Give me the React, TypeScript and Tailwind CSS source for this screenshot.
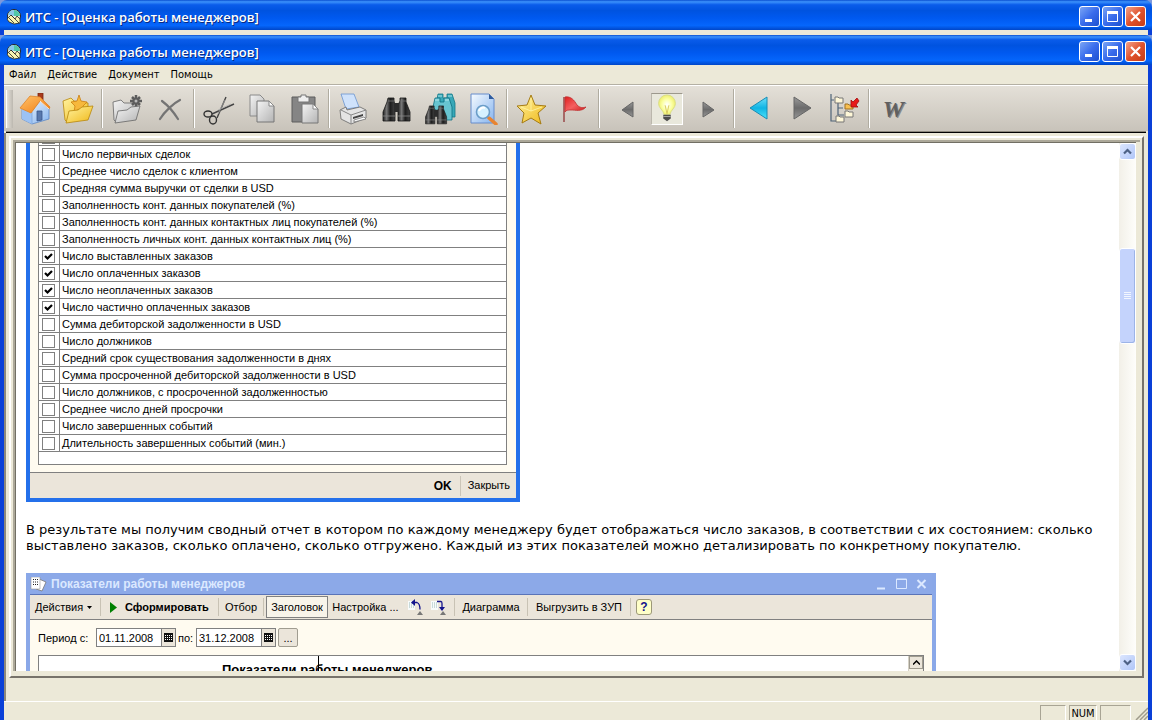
import type { ReactNode } from "react";

type Criterion = { label: string; checked?: boolean };
type Tool = { label: string; icon: ReactNode; active?: boolean };

const menu = ["Файл", "Действие", "Документ", "Помощь"];

const criteria: Criterion[] = [
  { label: "Число первичных сделок" },
  { label: "Среднее число сделок с клиентом" },
  { label: "Средняя сумма выручки от сделки в USD" },
  { label: "Заполненность конт. данных покупателей (%)" },
  { label: "Заполненность конт. данных контактных лиц покупателей (%)" },
  { label: "Заполненность личных конт. данных контактных лиц (%)" },
  { label: "Число выставленных заказов", checked: true },
  { label: "Число оплаченных заказов", checked: true },
  { label: "Число неоплаченных заказов", checked: true },
  { label: "Число частично оплаченных заказов", checked: true },
  { label: "Сумма дебиторской задолженности в USD" },
  { label: "Число должников" },
  { label: "Средний срок существования задолженности в днях" },
  { label: "Сумма просроченной дебиторской задолженности в USD" },
  { label: "Число должников, с просроченной задолженностью" },
  { label: "Среднее число дней просрочки" },
  { label: "Число завершенных событий" },
  { label: "Длительность завершенных событий (мин.)" },
];

/* ---------- icons ---------- */

function Icon({ children }: { children: ReactNode }) {
  return (
    <svg width="32" height="32" viewBox="0 0 32 32" fill="none" aria-hidden="true">
      {children}
    </svg>
  );
}

function Defs() {
  return (
    <svg width="0" height="0" className="absolute" aria-hidden="true">
      <defs>
        <linearGradient id="roof" x1="0" y1="0" x2="1" y2="1"><stop offset="0" stopColor="#ffc36a" /><stop offset="1" stopColor="#f07a10" /></linearGradient>
        <linearGradient id="wall" x1="0" y1="0" x2="1" y2="1"><stop offset="0" stopColor="#f6fbff" /><stop offset="1" stopColor="#86b4ee" /></linearGradient>
        <linearGradient id="gold" x1="0" y1="0" x2="1" y2="1"><stop offset="0" stopColor="#fff3a0" /><stop offset="1" stopColor="#f0b818" /></linearGradient>
        <linearGradient id="grey" x1="0" y1="0" x2="1" y2="1"><stop offset="0" stopColor="#f4f4f4" /><stop offset="1" stopColor="#b4b4b4" /></linearGradient>
        <linearGradient id="dark" x1="0" y1="0" x2="1" y2="0"><stop offset="0" stopColor="#222" /><stop offset="0.3" stopColor="#777" /><stop offset="0.6" stopColor="#1c1c1c" /><stop offset="1" stopColor="#444" /></linearGradient>
        <linearGradient id="steel" x1="0" y1="0" x2="0" y2="1"><stop offset="0" stopColor="#9a9a9a" /><stop offset="0.5" stopColor="#6b6b6b" /><stop offset="1" stopColor="#979797" /></linearGradient>
        <linearGradient id="aqua" x1="0" y1="0" x2="0" y2="1"><stop offset="0" stopColor="#6fe0fa" /><stop offset="0.5" stopColor="#10b4e4" /><stop offset="1" stopColor="#4ce4fa" /></linearGradient>
        <linearGradient id="flag" x1="0" y1="0" x2="1" y2="1"><stop offset="0" stopColor="#e02020" /><stop offset="0.5" stopColor="#f46060" /><stop offset="1" stopColor="#c81818" /></linearGradient>
        <radialGradient id="glow"><stop offset="0" stopColor="#ffffff" /><stop offset="0.6" stopColor="#fbffa0" /><stop offset="1" stopColor="#eeee70" /></radialGradient>
      </defs>
    </svg>
  );
}

const home = (
  <Icon>
    <path d="M19 0h5v9l-5-4z" fill="#a83a1c" stroke="#7c2812" strokeWidth="0.800" />
    <path d="M3 16v10l10 5 17-5V14l-9-7-8 11z" fill="url(#wall)" stroke="#5c86c4" strokeWidth="0.800" />
    <path d="m3 16 10 3v12l-10-5z" fill="#9cc2f4" />
    <path d="M13 19v12" stroke="#7ca6dc" strokeWidth="0.800" />
    <path d="M1 15 11 3l10 1 10 10-1 2-9-8-9 12z" fill="url(#roof)" stroke="#e08428" strokeWidth="0.800" />
    <path d="m21 8 9 8" stroke="#fff" strokeWidth="0.800" />
    <path d="M18 18h5v9l-5 1z" fill="#5878ac" stroke="#38558c" strokeWidth="0.800" />
  </Icon>
);

const folderStar = (
  <Icon>
    <path d="M1 8l8-3 3 3 14 2v8L5 29 3 27z" fill="url(#gold)" stroke="#b8860c" strokeWidth="0.800" />
    <path d="m17 2 2 6 6 1-4 4 1 6-5-3-5 3 1-6-4-4 6-1z" fill="#f6b83c" stroke="#cc8010" strokeWidth="0.800" />
    <path d="m7 18 9-1 4-3 11-1-5 14-22 3z" fill="url(#gold)" stroke="#b8860c" strokeWidth="0.800" />
  </Icon>
);

const folderNew = (
  <Icon>
    <path d="M2 9l8-2 3 3h13v8L5 29l-2-2z" fill="url(#grey)" stroke="#666" strokeWidth="0.800" />
    <path d="M25 2v12M19 8h12M21 4l8 8M29 4l-8 8" stroke="#5c5c5c" strokeWidth="2.500" />
    <circle cx="25" cy="8" r="1.500" fill="#bbb" />
    <path d="m7 18 9-1 4-3 9-1-4 14-21 3z" fill="url(#grey)" stroke="#666" strokeWidth="0.800" />
  </Icon>
);

const cross = (
  <Icon>
    <path d="M8 8c4 3 11 10 16 18M26 7C20 10 11 18 6 26" stroke="#747474" strokeWidth="2.200" strokeLinecap="round" />
  </Icon>
);

const scissors = (
  <Icon>
    <path d="m23 4-9 21M31 11 9 21" stroke="#444" strokeWidth="1.400" />
    <path d="m22 7-7 14M28 11l-13 6" stroke="#aaa" strokeWidth="0.700" />
    <ellipse cx="5" cy="21" rx="4" ry="3" stroke="#333" strokeWidth="1.400" />
    <ellipse cx="10" cy="27" rx="3.500" ry="4" stroke="#333" strokeWidth="1.400" />
  </Icon>
);

const copy = (
  <Icon>
    <path d="M4 2h10l4 4v17H4z" fill="url(#grey)" stroke="#8a8a8a" />
    <path d="M11 8h12l5 5v16H11z" fill="url(#grey)" stroke="#777" />
    <path d="M23 8v5h5z" fill="#fff" stroke="#888" />
  </Icon>
);

const paste = (
  <Icon>
    <path d="M3 4h23v25H3z" fill="#858585" stroke="#5c5c5c" />
    <path d="M9 4h3V2h5v2h3v5H9z" fill="#eee" stroke="#777" />
    <path d="M13 11h11l5 5v14H13z" fill="url(#grey)" stroke="#777" />
    <path d="M24 11v5h5z" fill="#fff" stroke="#888" />
  </Icon>
);

const printer = (
  <Icon>
    <path d="M3 1h13l5 13-13 2z" fill="#cfe2fb" stroke="#6a94d0" strokeWidth="0.800" />
    <path d="m2 17 6-3 1 3 13-3 6 3v8L13 31 3 26z" fill="#e4e4e4" stroke="#666" strokeWidth="0.800" />
    <path d="m3 17 10 5 15-5" stroke="#888" />
    <path d="M13 22v9" stroke="#888" />
    <path d="m15 24 10-3v2l-10 3z" fill="#444" />
    <path d="m16 29 12-3-2-2-10 3z" fill="#fff" stroke="#777" strokeWidth="0.800" />
  </Icon>
);

function BinocularShape() {
  return (
    <>
      <path d="M7 5h6v3l1 4v16H2V19L6 9z" fill="url(#dark)" stroke="#181818" strokeWidth="0.800" />
      <path d="M19 5h6v4l4 10v9H17V12l2-4z" fill="url(#dark)" stroke="#181818" strokeWidth="0.800" />
      <path d="M13 10h5v9h-5z" fill="#2c2c2c" />
      <path d="M2 23h12M17 23h12" stroke="#888" strokeWidth="0.800" />
      <path d="M7 8h6M19 8h6" stroke="#777" strokeWidth="0.800" />
    </>
  );
}

const binoculars = <Icon><BinocularShape /></Icon>;

const binocularsAll = (
  <Icon>
    <path d="M14 1h5v4h4V1h5l3 9v14h-7L12 11z" fill="#38a8b8" stroke="#147888" strokeWidth="0.800" />
    <path d="M11 5h5v4h4V5h5l3 9v13h-7L9 14z" fill="#67c4d0" stroke="#0c6f80" strokeWidth="0.800" />
    <path d="M14 3h4M24 3h4M11 7h4M21 7h4" stroke="#c8f2f6" strokeWidth="0.800" />
    <g transform="translate(0 9) scale(0.780 0.780)"><BinocularShape /></g>
  </Icon>
);

const findInPage = (
  <Icon>
    <path d="M4 1h18l5 5v24H4z" fill="url(#wall)" stroke="#668ccc" />
    <path d="M22 1v5h5z" fill="#315c9c" />
    <path d="m22 25 7 6" stroke="#e88430" strokeWidth="3.500" strokeLinecap="round" />
    <circle cx="16" cy="19" r="6.500" fill="#d5f1ff" stroke="#6b9dc8" strokeWidth="1.600" />
    <path d="M12 18c1-3 4-4 6-3" stroke="#fff" strokeWidth="2" />
  </Icon>
);

const star = (
  <Icon>
    <path d="m15 2 4 10 11 1-8 7 3 11-10-6-9 5 2-10-7-7 10-1z" fill="url(#gold)" stroke="#a67c14" />
    <path d="M15 5v13L5 14M15 18l11-4" stroke="#fff6a8" strokeWidth="0.800" />
  </Icon>
);

const flag = (
  <Icon>
    <path d="M5 4v25" stroke="#9c5050" strokeWidth="1.600" />
    <path d="M6 4c6-1 9 3 12 8 3 3 6 3 9 2-4 5-11 3-15 3-3 0-5 0-6 2z" fill="url(#flag)" stroke="#c03030" strokeWidth="0.800" />
  </Icon>
);

const smallLeft = <Icon><path d="M25 9v15L14 17z" fill="url(#steel)" stroke="#666" /></Icon>;
const smallRight = <Icon><path d="M9 9v15l11-7z" fill="url(#steel)" stroke="#666" /></Icon>;
const bigLeft = <Icon><path d="M24 4v22L7 15z" fill="url(#aqua)" stroke="#188cb4" /></Icon>;
const bigRight = <Icon><path d="M8 4v22l17-11z" fill="url(#steel)" stroke="#666" /></Icon>;

const bulb = (
  <Icon>
    <path d="M7 10a9 9 0 0 1 18 0c0 5-5 7-6 12h-6C12 17 7 15 7 10z" fill="url(#glow)" stroke="#d9dd84" />
    <path d="m14 12 2 9 2-9" stroke="#d8c860" />
    <path d="M12 22h8v4l-4 3-4-3z" fill="#4c4c4c" />
    <path d="M12 24h8" stroke="#aaa" />
  </Icon>
);

const tree = (
  <Icon>
    <path d="M2 1v27h5M2 7h3M9 10v12h6M9 15h5" stroke="#4f6478" strokeWidth="1.200" />
    <path d="M6 4h3l1 1h4v5H6zM7 23h3l1 1h4v5H7zM16 18h3l1 1h4v5h-8z" fill="#fff8d8" stroke="#767676" />
    <path d="M16 11h3l1 1h4v4h-8z" fill="#f8c050" stroke="#a07020" />
    <path d="m28 5-4 4-2-2v7h7l-2-2 3-4z" fill="#e81818" stroke="#a00c0c" strokeWidth="0.800" />
  </Icon>
);

const word = (
  <span aria-hidden="true" className="font-['Liberation_Serif',serif] text-2xl font-bold italic text-[#606060] [text-shadow:1px_1px_0_#888]">W</span>
);

const toolGroups: Tool[][] = [
  [{ label: "Домой", icon: home }, { label: "Открыть избранное", icon: folderStar }],
  [{ label: "Новая папка", icon: folderNew }, { label: "Удалить", icon: cross }],
  [{ label: "Вырезать", icon: scissors }, { label: "Копировать", icon: copy }, { label: "Вставить", icon: paste }],
  [{ label: "Печать", icon: printer }, { label: "Найти", icon: binoculars }, { label: "Найти везде", icon: binocularsAll }, { label: "Найти на странице", icon: findInPage }],
  [{ label: "Избранное", icon: star }, { label: "Пометить", icon: flag }],
  [{ label: "Предыдущее", icon: smallLeft }, { label: "Подсветка", icon: bulb, active: true }, { label: "Следующее", icon: smallRight }],
  [{ label: "Назад", icon: bigLeft }, { label: "Вперед", icon: bigRight }, { label: "Дерево", icon: tree }],
  [{ label: "Экспорт в Word", icon: word }],
];

/* ---------- window chrome ---------- */

function AppLogo() {
  return (
    <svg width="16" height="16" viewBox="0 0 16 16" aria-hidden="true">
      <circle cx="8" cy="7" r="6.500" fill="#f4f4d8" stroke="#222" />
      <path d="M8 1a6 6 0 0 1 6 6H8z" fill="#50c8a8" />
      <path d="M8 1a6 6 0 0 0-6 5l6 1z" fill="#88c8e8" />
      <path d="m1 10 4-4 4 4 2-3 3 3v4l-6 1-5-2z" fill="#f8f4b0" stroke="#222" strokeWidth="0.800" />
      <path d="m5 6 8 8M3 9l5 5" stroke="#222" strokeWidth="0.800" />
    </svg>
  );
}

function CaptionButton({ label, close, children }: { label: string; close?: boolean; children: ReactNode }) {
  return (
    <button
      aria-label={label}
      className={[
        "flex size-[21px] items-center justify-center rounded-[3px] border border-white bg-linear-to-br",
        close ? "from-[#f0a088] via-[#e0522c] to-[#c83c14]" : "from-[#7ca4f4] via-[#3a6cec] to-[#1c50d0]",
      ].join(" ")}
    >
      <svg width="15" height="15" viewBox="0 0 15 15" fill="none" stroke="#fff" aria-hidden="true">{children}</svg>
    </button>
  );
}

function TitleBar() {
  return (
    <div className="flex h-[30px] shrink-0 items-center justify-between rounded-t-[7px] bg-[linear-gradient(#0a4fd0_0%,#3c92fc_6%,#0a5cea_16%,#0053e0_35%,#0059f0_60%,#0566fc_85%,#0046c8_100%)] px-[6px] pt-[3px]">
      <div className="flex items-center gap-[3px]">
        <AppLogo />
        <h1 className="whitespace-nowrap font-['Open_Sans',sans-serif] text-[13px] font-semibold leading-4 text-white [text-shadow:1px_1px_0_#0a2a80]">
          ИТС - [Оценка работы менеджеров]
        </h1>
      </div>
      <div className="flex gap-[2px]">
        <CaptionButton label="Свернуть"><path d="M3 11.500h7" strokeWidth="3" /></CaptionButton>
        <CaptionButton label="Развернуть"><path d="M2 3.500h11" strokeWidth="3" /><path d="M2.500 3v9.500h10V3" /></CaptionButton>
        <CaptionButton label="Закрыть окно" close><path d="m3 3 9 9M12 3l-9 9" strokeWidth="2.200" /></CaptionButton>
      </div>
    </div>
  );
}

function MenuBar() {
  return (
    <nav className="flex h-5 items-start gap-[11px] border-b border-[#b4b0a4] bg-[#ece9d8] pl-[5px] pt-[2px] font-['DejaVu_Sans_Condensed','DejaVu_Sans',sans-serif] text-[11px] leading-4 text-black">
      {menu.map((m) => (
        <button key={m}>{m}</button>
      ))}
    </nav>
  );
}

function Toolbar() {
  return (
    <div className="flex h-[46px] shrink-0 items-center border-t border-white bg-linear-to-b from-[#e4e0d8] to-[#c8c3ba] pl-[2px]">
      <div className="h-[38px] w-[7px] border-l border-white bg-linear-to-r from-[#e4e0d8] to-[#bcb8b0]" />
      {toolGroups.map((group, i) => (
        <div key={i} className="flex items-center">
          {i > 0 && <div className="mx-[2px] h-[39px] w-[2px] border-l border-[#b0aca0] bg-white" />}
          {group.map((t) => (
            <button key={t.label} aria-label={t.label} className="flex h-9 w-[43px] items-center justify-center">
              <span className={t.active ? "flex size-8 items-center justify-center border border-b-white border-r-white border-t-[#9c988c] border-l-[#bbb7ac] bg-[#e9e8dc]" : "flex size-8 items-center justify-center"}>
                {t.icon}
              </span>
            </button>
          ))}
        </div>
      ))}
    </div>
  );
}

function ScrollButton({ down }: { down?: boolean }) {
  return (
    <button aria-label={down ? "Вниз" : "Вверх"} className="flex h-[17px] shrink-0 items-center justify-center rounded-[3px] border border-white bg-linear-to-br from-[#dce6fe] to-[#b0c6f8]">
      <svg width="9" height="7" viewBox="0 0 9 7" fill="none" stroke="#4d6185" strokeWidth="2.200" aria-hidden="true">
        <path d={down ? "m1 1.500 3.500 3.500L8 1.500" : "M1 5.500 4.500 2 8 5.500"} />
      </svg>
    </button>
  );
}

function Scrollbar() {
  return (
    <div className="flex w-[17px] shrink-0 flex-col bg-linear-to-r from-[#f2f0e8] to-[#fefefb]">
      <ScrollButton />
      <div className="flex-[88]" />
      <div className="flex flex-[95] flex-col items-center justify-center gap-px rounded-[3px] border border-white bg-[#c4d3fc] shadow-[inset_-1px_-1px_0_#9cb4e8]">
        {[0, 1, 2, 3].map((n) => (
          <div key={n} className="h-px w-[7px] bg-[#f2f6ff]" />
        ))}
      </div>
      <div className="flex-[311]" />
      <ScrollButton down />
    </div>
  );
}

/* ---------- article ---------- */

function CriterionRow({ label, checked }: Criterion) {
  return (
    <label className="flex h-[17px] items-center border-b border-[#808080]">
      <span className="relative flex h-4 w-[21px] items-center justify-center border-r border-[#808080] pr-[2px]">
        <input type="checkbox" defaultChecked={checked} className="peer size-[13px] appearance-none border border-[#808080] bg-white" />
        <svg width="9" height="9" viewBox="0 0 9 9" className="absolute hidden peer-checked:block" aria-hidden="true">
          <path d="m1 4 2.500 2.500L8 2" fill="none" stroke="#000" strokeWidth="2.200" />
        </svg>
      </span>
      <span className="whitespace-nowrap pl-[2px]">{label}</span>
    </label>
  );
}

function CriteriaDialog() {
  return (
    <section className="-mt-[14px] w-[494px] border-4 border-t-0 border-[#2470ea] bg-[#fffbf0]">
      <div className="ml-2 mr-[9px] border border-t-0 border-[#808080] bg-white text-[11px] leading-4">
        <CriterionRow label="" />
        {criteria.map((c) => (
          <CriterionRow key={c.label} {...c} />
        ))}
        <div className="h-3" />
      </div>
      <div className="mt-[7px] flex h-[26px] items-center justify-end border-t border-[#808080] bg-[#ebe5da] pr-[6px] text-[11px]">
        <button className="pr-2 text-xs font-bold">OK</button>
        <div className="h-5 w-px bg-[#cbc5b8]" />
        <button className="pl-[7px]">Закрыть</button>
      </div>
    </section>
  );
}

function Divider() {
  return <div className="h-[18px] w-px bg-[#c8c2b4]" />;
}

function StepIcon({ down }: { down?: boolean }) {
  return (
    <svg width="16" height="16" viewBox="0 0 16 16" fill="none" aria-hidden="true">
      <path d="M1 2h7v9H1z" fill="#f8fbfb" />
      <path d="M2 4h5M2 6h5M2 8h5" stroke="#98b8b8" strokeDasharray="1 1" />
      <path d={down ? "M7 2.500h4q1 0 1 2v6" : "M5 3.500h5q3 1 3 7"} stroke="#14148c" strokeWidth="1.300" />
      <path d={down ? "M9 8h6l-3 4z" : "M8 0v7L4 3.500z"} fill="#14148c" />
      <path d="m10 16 3-4 3 4z" fill="#777" />
    </svg>
  );
}

function DateField({ label, value, labelClass }: { label: string; value: string; labelClass: string }) {
  return (
    <label className="flex items-center">
      <span className={labelClass}>{label}</span>
      <input defaultValue={value} className="h-[19px] w-[66px] border border-[#808080] bg-white pl-[2px]" />
      <span className="-ml-px flex h-[19px] w-[15px] items-center justify-center border border-[#808080] bg-[#ebe5da]">
        <svg width="9" height="9" viewBox="0 0 9 9" aria-hidden="true">
          <path d="M0 0h9v9H0z" fill="#111" />
          <path d="M1 2.500h7M1 4.500h7M1 6.500h7" stroke="#fff" strokeDasharray="1 1" />
        </svg>
      </span>
    </label>
  );
}

function ReportWindow() {
  return (
    <section className="mt-[19px] w-[910px] border-x-4 border-t border-[#8aa8e8] bg-[#fffbf0] text-[11px] leading-4">
      <div className="flex h-[21px] items-center border-b border-[#5a74b8] bg-[#8ca9e8]">
        <svg width="17" height="15" viewBox="0 0 17 15" aria-hidden="true">
          <path d="m9 2 7 3-4 9-6-2z" fill="#fff" stroke="#777" strokeWidth="0.800" />
          <path d="M1 0h9v12H1z" fill="#fff" stroke="#999" strokeWidth="0.600" />
          <path d="M3 2.500h6M3 5h6M3 7.500h6" stroke="#222" strokeDasharray="1 1" />
        </svg>
        <h2 className="ml-1 grow text-xs font-bold text-[#dbe8ff]">Показатели работы менеджеров</h2>
        <div className="flex gap-2 pr-1">
          {["M1 10.500h8", "M.5 2v8.500h10V1H.5zM0 1.500h11", "m1.500 2 8 8M9.500 2l-8 8"].map((d, i) => (
            <button key={d} aria-label={["Свернуть", "Развернуть", "Закрыть"][i]}>
              <svg width="12" height="12" viewBox="0 0 12 12" fill="none" stroke="#dbe8ff" strokeWidth={i === 1 ? 1 : 2} aria-hidden="true"><path d={d} /></svg>
            </button>
          ))}
        </div>
      </div>

      <div className="flex h-[25px] items-center border-b border-[#808080] bg-[#ebe5da]">
        <button className="flex w-[70px] items-center gap-1 pl-[5px]">
          Действия
          <svg width="5" height="3" viewBox="0 0 5 3" aria-hidden="true"><path d="M0 0h5L2.500 3z" /></svg>
        </button>
        <Divider />
        <button className="flex w-[117px] items-center gap-2 pl-[9px] font-bold">
          <svg width="7" height="11" viewBox="0 0 7 11" aria-hidden="true"><path d="m0 0 7 5.500L0 11z" fill="#008000" /></svg>
          Сформировать
        </button>
        <Divider />
        <button className="w-[44px]">Отбор</button>
        <Divider />
        <button className="ml-[2px] h-[22px] w-[62px] border border-[#808080] bg-[#f8f4ea]">Заголовок</button>
        <button className="w-[75px] whitespace-nowrap">Настройка ...</button>
        <div className="flex w-[51px] gap-[7px] pl-1">
          <button aria-label="Свернуть уровень"><StepIcon /></button>
          <button aria-label="Развернуть уровень"><StepIcon down /></button>
        </div>
        <Divider />
        <button className="w-[72px]">Диаграмма</button>
        <Divider />
        <button className="w-[102px] whitespace-nowrap">Выгрузить в ЗУП</button>
        <Divider />
        <button className="ml-[5px] size-4 rounded-[3px] border border-[#9c9878] bg-[#ffffc8] text-xs font-bold leading-3 text-[#14148c]">?</button>
      </div>

      <div className="flex items-center gap-[2px] p-2">
        <DateField label="Период с:" value="01.11.2008" labelClass="w-[58px]" />
        <DateField label="по:" value="31.12.2008" labelClass="w-[18px]" />
        <button aria-label="Выбрать период" className="h-[19px] w-5 rounded-[2px] border border-[#a09c90] bg-[#ebe5da]">...</button>
      </div>

      <div className="mx-2 flex h-24 border border-[#808080] bg-white">
        <div className="w-[280px] border-r border-black pl-[183px] pt-1">
          <h3 className="whitespace-nowrap text-[13px] font-bold leading-5">Показатели работы менеджеров</h3>
        </div>
        <div className="grow" />
        <div className="w-[15px] border-l border-[#d4d0c4] bg-[#f4f0e4]">
          <button aria-label="Прокрутить вверх" className="flex h-[13px] w-[14px] items-center justify-center border border-[#a09c90] bg-[#ebe5da]">
            <svg width="7" height="5" viewBox="0 0 7 5" fill="none" stroke="#000" strokeWidth="1.500" aria-hidden="true"><path d="M0 4.500 3.500 1 7 4.500" /></svg>
          </button>
        </div>
      </div>
    </section>
  );
}

export default function App() {
  return (
    <div className="flex h-screen flex-col overflow-hidden bg-[#7c98dc] font-['Liberation_Sans',sans-serif] text-black">
      <Defs />
      <TitleBar />
      {/* the window behind shows only the top edge of its menu */}
      <div className="h-[5px] shrink-0 overflow-hidden border-x-4 border-[#0a40d8]">
        <MenuBar />
      </div>

      <TitleBar />
      <div className="flex min-h-0 flex-1 flex-col border-x-4 border-[#0a40d8] bg-[#ece9d8]">
        <MenuBar />
        <Toolbar />
        <div className="mx-[2px] h-[2px] shrink-0 border-t border-[#8c887c] bg-black" />

        <div className="flex min-h-0 flex-1 flex-col border-l-2 border-[#8c887c] pb-[23px] pl-[3px] pr-1 pt-[3px]">
          <div className="flex min-h-0 flex-1 border-2 border-b-[#77736a] border-l-white border-r-[#77736a] border-t-white p-[2px] pb-[5px]">
            <div className="flex min-h-0 flex-1 border-l-2 border-t-2 border-[#aca899] pr-1">
              <div className="flex min-h-0 flex-1 overflow-hidden border-l border-t border-[#716f64] bg-white">
                <main className="min-w-0 flex-1 overflow-hidden pl-[10px]">
                  <CriteriaDialog />
                  <p className="mr-5 mt-5 font-['DejaVu_Sans',sans-serif] text-[13px] leading-4">
                    В результате мы получим сводный отчет в котором по каждому менеджеру будет отображаться число заказов, в соответствии с их состоянием: сколько выставлено заказов, сколько оплачено, сколько отгружено. Каждый из этих показателей можно детализировать по конкретному покупателю.
                  </p>
                  <ReportWindow />
                </main>
                <Scrollbar />
              </div>
            </div>
          </div>
        </div>

        <footer className="flex h-[19px] shrink-0 items-end justify-end gap-[3px] border-t border-white font-['DejaVu_Sans_Condensed','DejaVu_Sans',sans-serif] text-[11px] leading-4">
          <div className="h-[15px] w-[26px] border border-b-0 border-l-[#a8a494] border-r-white border-t-[#a8a494]" />
          <div className="h-[15px] w-7 border border-b-0 border-l-[#a8a494] border-r-white border-t-[#a8a494] text-center">NUM</div>
          <div className="h-[15px] w-[31px] border border-b-0 border-l-[#a8a494] border-r-white border-t-[#a8a494]" />
          <svg width="14" height="13" viewBox="0 0 14 13" stroke="#a09c8c" strokeWidth="1.500" aria-hidden="true">
            <path d="M2 13 14 1M6 13l8-8M10 13l4-4" />
          </svg>
        </footer>
      </div>
    </div>
  );
}
